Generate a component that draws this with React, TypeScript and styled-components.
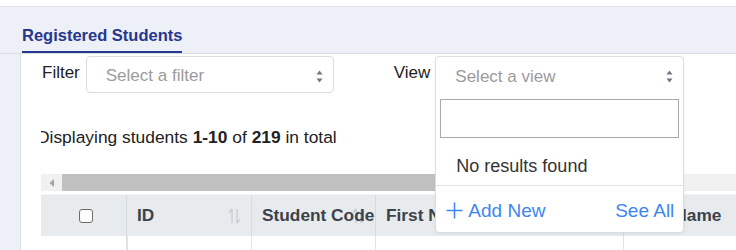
import React from 'react';
import styled, { createGlobalStyle } from 'styled-components';

const GlobalStyle = createGlobalStyle`
  html, body {
    margin: 0;
    padding: 0;
    background: #ffffff;
    font-family: "Liberation Sans", Arial, sans-serif;
    overflow: hidden;
  }
`;

const Page = styled.div`
  width: 736px;
  height: 250px;
  overflow: hidden;
`;

const TopStrip = styled.div`
  height: 6px;
  background: #ffffff;
  border-bottom: 1px solid #dfe3ea;
`;

const TabBar = styled.div`
  height: 46px;
  background: #edf0f7;
  border-bottom: 1px solid #d9dee6;
  display: flex;
  align-items: flex-end;
  padding-left: 22px;
`;

const Tab = styled.div`
  font-size: 16.5px;
  line-height: 18px;
  font-weight: 700;
  color: #27378e;
  padding-bottom: 7px;
  border-bottom: 2px solid #27378e;
`;

const Body = styled.div`
  display: flex;
  height: 200px;
`;

const Gutter = styled.div`
  width: 20px;
  flex: none;
  background: #edf0f7;
  border-right: 1px solid #dbe0e8;
`;

const Content = styled.div`
  flex: 1;
  min-width: 0;
  padding: 2px 0 0 20px;
  overflow: hidden;
`;

const FilterRow = styled.div`
  display: flex;
  align-items: flex-start;
  height: 37px;
  padding-left: 1px;
`;

const Label = styled.span<{ $gap: number }>`
  font-size: 17px;
  color: #222;
  padding-top: 7px;
  margin-right: ${p => p.$gap}px;
`;

const SelectBox = styled.div`
  width: 248px;
  height: 37px;
  box-sizing: border-box;
  border: 1px solid #dadee4;
  border-radius: 4px;
  display: flex;
  align-items: center;
  justify-content: space-between;
  padding: 3px 10px 0 19px;
  margin-right: 60px;
`;

const Placeholder = styled.span`
  font-size: 17px;
  color: #9b9b9b;
`;

const ViewWrap = styled.div`
  position: relative;
  width: 249px;
  height: 37px;
`;

const Menu = styled.div`
  position: absolute;
  top: 0;
  left: 0;
  width: 249px;
  height: 177px;
  box-sizing: border-box;
  border: 1px solid #dadfe5;
  border-radius: 4px;
  background: #ffffff;
  box-shadow: 0 1px 3px rgba(0, 0, 0, 0.06);
  z-index: 10;
  display: flex;
  flex-direction: column;
`;

const MenuHead = styled.div`
  height: 36px;
  box-sizing: border-box;
  display: flex;
  align-items: center;
  justify-content: space-between;
  padding: 3px 10px 0 19px;
`;

const SearchBox = styled.div`
  margin: 6px 4px 0 4px;
  height: 39px;
  box-sizing: border-box;
  border: 1px solid #a9a9a9;
`;

const NoResults = styled.div`
  height: 48px;
  box-sizing: border-box;
  padding: 17px 0 0 20px;
  font-size: 18px;
  line-height: 22px;
  color: #333;
  border-bottom: 1px solid #e0e4e9;
`;

const MenuFoot = styled.div`
  flex: 1;
  display: flex;
  align-items: center;
  justify-content: space-between;
  padding: 3px 9px 0 10px;
`;

const LinkText = styled.span`
  display: flex;
  align-items: center;
  gap: 5px;
  font-size: 19px;
  color: #3d86f0;
`;

const Info = styled.div`
  margin-top: 34px;
  font-size: 17.4px;
  line-height: 20px;
  color: #222;
  white-space: nowrap;
  text-indent: -4px;
  overflow: hidden;
  b {
    font-weight: 700;
  }
`;

const TableWrap = styled.div`
  margin-top: 27px;
  width: 900px;
`;

const ScrollBar = styled.div`
  height: 17px;
  display: flex;
  background: #f1f1f1;
`;

const ScrollBtn = styled.div`
  width: 21px;
  display: flex;
  align-items: center;
  justify-content: center;
`;

const Thumb = styled.div`
  width: 580px;
  background: #c1c1c1;
`;

const Row = styled.div<{ $head?: boolean }>`
  display: grid;
  grid-template-columns: 85px 125px 124px 248px 300px;
  height: ${p => (p.$head ? '41px' : '20px')};
  margin-top: ${p => (p.$head ? '3px' : '0')};
  background: ${p => (p.$head ? '#e8ebee' : '#ffffff')};
  border-top: ${p => (p.$head ? '1px solid #f2f4f6' : 'none')};
`;

const Cell = styled.div<{ $first?: boolean; $head?: boolean }>`
  position: relative;
  display: flex;
  align-items: center;
  justify-content: ${p => (p.$first ? 'center' : 'flex-start')};
  padding: ${p => (p.$first ? '0 0 0 5px' : '0 0 0 10px')};
  border-left: ${p => (p.$first ? 'none' : p.$head ? '1px solid #d6dbe0' : '1px solid #dfe3e7')};
  font-size: 17.3px;
  font-weight: 700;
  color: #3c4249;
  white-space: nowrap;
  overflow: hidden;
  &:nth-child(2) {
    border-left-width: ${p => (p.$head ? '1px' : '2px')};
  }
`;

const HeadText = styled.span`
  position: relative;
  z-index: 1;
`;

const Checkbox = styled.span`
  width: 14px;
  height: 14px;
  box-sizing: border-box;
  border: 1.5px solid #6b6b6b;
  border-radius: 3px;
  background: #fff;
`;

const SortIcon = styled.svg`
  position: absolute;
  right: 10px;
  top: 13px;
`;

const Updown = () => (
  <svg width="7" height="13" viewBox="0 0 7 13">
    <path d="M3.5 0.5 L6.5 4.5 L0.5 4.5 Z" fill="#6f7780" />
    <path d="M3.5 12.5 L6.5 8.5 L0.5 8.5 Z" fill="#6f7780" />
  </svg>
);

const Sort = () => (
  <SortIcon width="13" height="16" viewBox="0 0 13 16">
    <path d="M4 15 V1 M4 1 L1 4.5" stroke="#c6cbd0" strokeWidth="1.3" fill="none" />
    <path d="M9 1 V15 M9 15 L12 11.5" stroke="#c6cbd0" strokeWidth="1.3" fill="none" />
  </SortIcon>
);

const Plus = () => (
  <svg width="17" height="17" viewBox="0 0 17 17">
    <path d="M8.5 0.5 V16.5 M0.5 8.5 H16.5" stroke="#3d86f0" strokeWidth="1.5" />
  </svg>
);

export default function App() {
  return (
    <Page>
      <GlobalStyle />
      <TopStrip />
      <TabBar>
        <Tab>Registered Students</Tab>
      </TabBar>
      <Body>
        <Gutter />
        <Content>
          <FilterRow>
            <Label $gap={6}>Filter</Label>
            <SelectBox>
              <Placeholder>Select a filter</Placeholder>
              <Updown />
            </SelectBox>
            <Label $gap={5}>View</Label>
            <ViewWrap>
              <Menu>
                <MenuHead>
                  <Placeholder>Select a view</Placeholder>
                  <Updown />
                </MenuHead>
                <SearchBox />
                <NoResults>No results found</NoResults>
                <MenuFoot>
                  <LinkText>
                    <Plus />
                    Add New
                  </LinkText>
                  <LinkText>See All</LinkText>
                </MenuFoot>
              </Menu>
            </ViewWrap>
          </FilterRow>
          <Info>
            Displaying students <b>1-10</b> of <b>219</b> in total
          </Info>
          <TableWrap>
            <ScrollBar>
              <ScrollBtn>
                <svg width="6" height="8" viewBox="0 0 6 8">
                  <path d="M5 0 L5 8 L0.5 4 Z" fill="#a3a3a3" />
                </svg>
              </ScrollBtn>
              <Thumb />
            </ScrollBar>
            <Row $head>
              <Cell $first $head>
                <Checkbox />
              </Cell>
              <Cell $head>
                <Sort />
                <HeadText>ID</HeadText>
              </Cell>
              <Cell $head>
                <Sort />
                <HeadText>Student Code</HeadText>
              </Cell>
              <Cell $head>
                <Sort />
                <HeadText>First Name</HeadText>
              </Cell>
              <Cell $head>
                <HeadText>Last Name</HeadText>
              </Cell>
            </Row>
            <Row>
              <Cell $first />
              <Cell />
              <Cell />
              <Cell />
              <Cell />
            </Row>
          </TableWrap>
        </Content>
      </Body>
    </Page>
  );
}
